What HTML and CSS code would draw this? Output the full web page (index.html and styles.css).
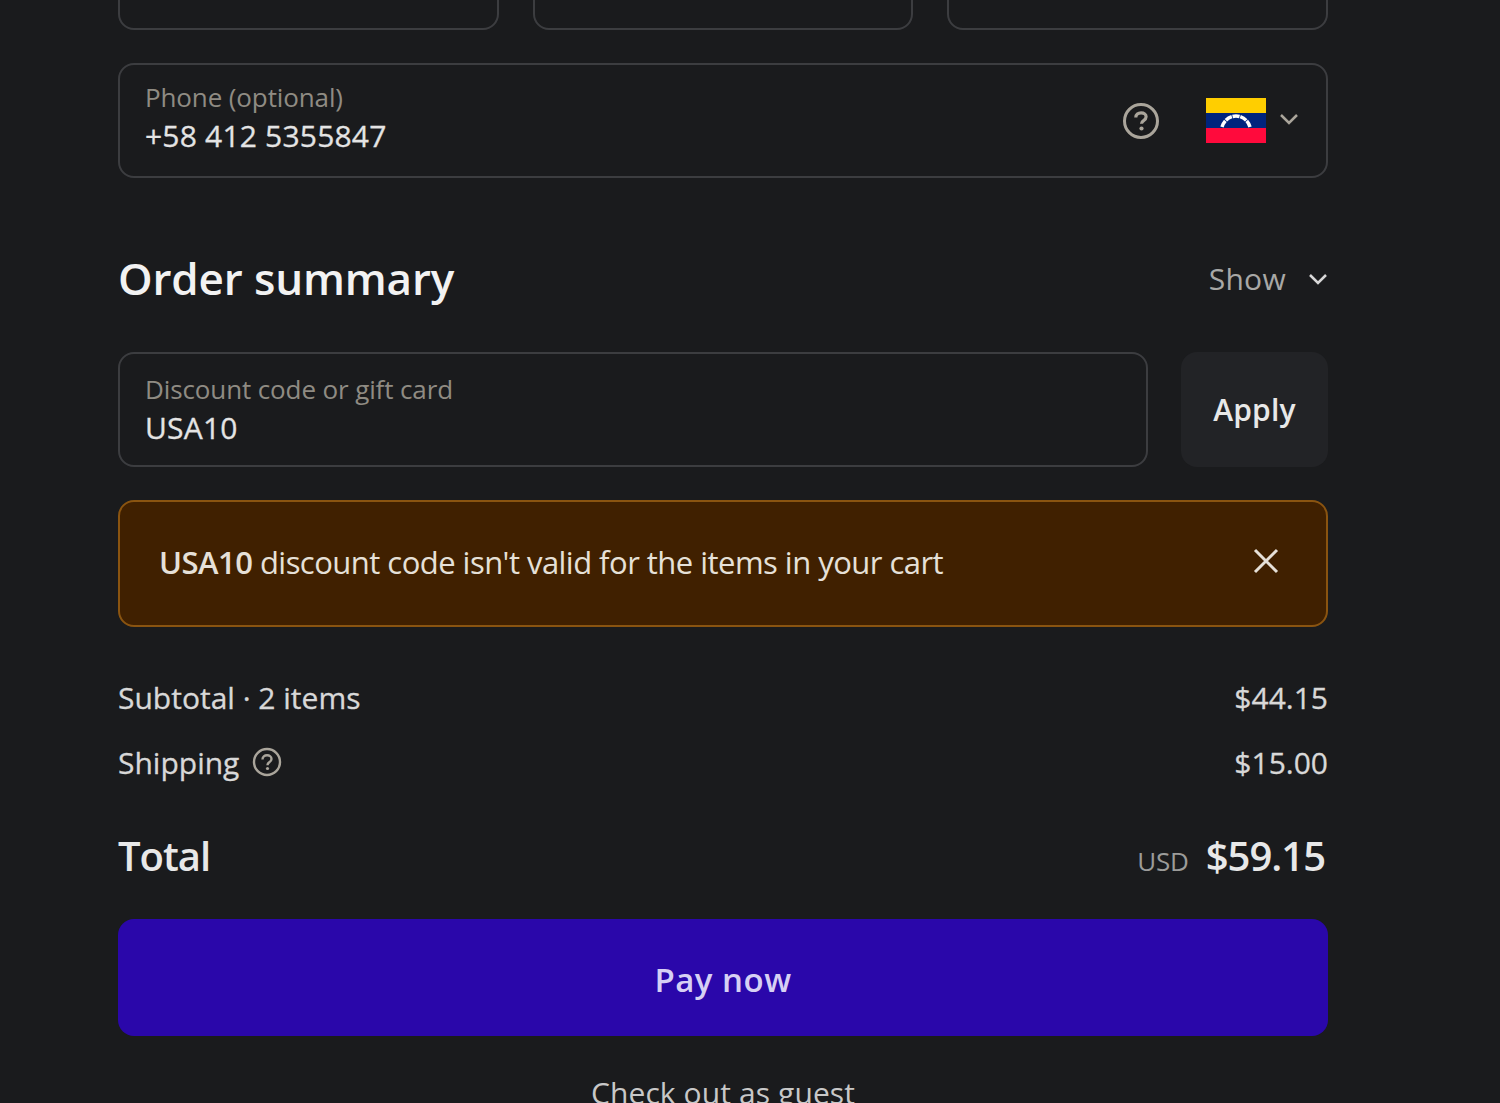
FILE: index.html
```html
<!DOCTYPE html>
<html>
<head>
   <meta charset="UTF-8">
   <meta name="viewport" content="width=device-width, initial-scale=1.0">
   <title>Checkout</title>
   <link rel="stylesheet" href="styles.css">
</head>
<body>
   <div class="checkout">
       <div class="address-row">
           <div class="field"></div>
           <div class="field"></div>
           <div class="field"></div>
       </div>

       <div class="field phone-field">
           <div class="field-text">
               <span class="field-label">Phone (optional)</span>
               <span class="field-value">+58 412 5355847</span>
           </div>
           <svg class="help-icon" viewBox="0 0 38 38" fill="none">
               <circle cx="19" cy="19" r="16.5" stroke="#aaa59b" stroke-width="3"/>
               <path d="M13.8 15.500c0-3 2.300-4.700 5.300-4.700 2.900 0 5 1.600 5 4 0 1.800-1 2.800-2.500 3.800-1.400.9-2.100 1.600-2.100 3.200" stroke="#aaa59b" stroke-width="3.200"/>
               <circle cx="19.500" cy="26.500" r="2.100" fill="#aaa59b"/>
           </svg>
           <svg class="flag" viewBox="0 0 60 45">
               <rect width="60" height="15" fill="#ffce00"/>
               <rect y="15" width="60" height="15" fill="#00247d"/>
               <rect y="30" width="60" height="15" fill="#ff0a3c"/>
               <path d="M16 29c2-7 8-11 14-11s12 4 14 11" fill="none" stroke="#fff" stroke-width="3.500" stroke-dasharray="7 .8"/>
           </svg>
           <svg class="chevron" viewBox="0 0 20 12" fill="none">
               <path d="M2 2l8 8 8-8" stroke="#aaa59b" stroke-width="2.500"/>
           </svg>
       </div>

       <div class="summary-head">
           <h2>Order summary</h2>
           <div class="show-toggle">
               <span>Show</span>
               <svg class="chevron" viewBox="0 0 20 12" fill="none">
                   <path d="M2 2l8 8 8-8" stroke="#d8d8d8" stroke-width="2.500"/>
               </svg>
           </div>
       </div>

       <div class="discount-row">
           <div class="field discount-field">
               <div class="field-text">
                   <span class="field-label">Discount code or gift card</span>
                   <span class="field-value">USA10</span>
               </div>
           </div>
           <button class="apply-button">Apply</button>
       </div>

       <div class="banner">
           <p><strong>USA10</strong> discount code isn't valid for the items in your cart</p>
           <svg class="close-icon" viewBox="0 0 26 26" fill="none">
               <path d="M2 2l22 22M24 2L2 24" stroke="#e6e0d8" stroke-width="3"/>
           </svg>
       </div>

       <div class="line-row subtotal-row">
           <span>Subtotal · 2 items</span>
           <span>$44.15</span>
       </div>
       <div class="line-row shipping-row">
           <span class="shipping-label">Shipping
               <svg class="help-small" viewBox="0 0 30 30" fill="none">
                   <circle cx="15" cy="15" r="13" stroke="#aaa59b" stroke-width="2.400"/>
                   <path d="M10.500 12.500c0-2.600 2-4.200 4.600-4.200 2.500 0 4.400 1.500 4.400 3.600 0 1.600-.9 2.500-2.200 3.400-1.200.8-1.800 1.500-1.800 2.900" stroke="#aaa59b" stroke-width="2.400"/>
                   <circle cx="15.500" cy="21.500" r="1.600" fill="#aaa59b"/>
               </svg>
           </span>
           <span>$15.00</span>
       </div>
       <div class="total-row">
           <span class="total-label">Total</span>
           <span class="total-value"><small>USD</small>$59.15</span>
       </div>

       <button class="pay-button">Pay now</button>
       <div class="guest-link">Check out as guest</div>
   </div>
</body>
</html>
```

FILE: styles.css
```css
* {
    margin: 0;
    padding: 0;
    box-sizing: border-box;
}

html, body {
    height: 1103px;
    overflow: hidden;
}

body {
    font-family: 'Open Sans', 'Noto Sans', sans-serif;
    color: #e4e4e4;
    background-color: #1a1b1d;
}

/* page is scrolled, the first row is cut off by the window */
.checkout {
    width: 1210px;
    margin-left: 118px;
    margin-top: -85px;
}

.address-row {
    display: grid;
    grid-template-columns: repeat(3, 1fr);
    gap: 34px;
    margin-bottom: 33px;
}

.field {
    height: 115px;
    border: 2px solid #3c3d40;
    border-radius: 16px;
    display: flex;
    align-items: center;
    padding: 0 27px 0 25px;
}

.field-text {
    display: flex;
    flex-direction: column;
    flex: 1;
}

.phone-field .field-text {
    margin-top: -6px;
}

.field-label {
    font-size: 26px;
    line-height: 34px;
    letter-spacing: -0.12px;
    color: #8f8b83;
}

.field-value {
    font-size: 30px;
    line-height: 40px;
    letter-spacing: 0.2px;
    margin-top: 2px;
    color: #e4e4e4;
    -webkit-text-stroke: 0.3px #e4e4e4;
}

.help-icon {
    width: 38px;
    height: 38px;
    margin-right: 46px;
}

.flag {
    width: 60px;
    height: 45px;
    margin-right: 13px;
}

.chevron {
    width: 20px;
    height: 12px;
}

.phone-field .chevron {
    margin-top: -4px;
}

.summary-head {
    display: flex;
    justify-content: space-between;
    align-items: center;
    margin-top: 70px;
    margin-bottom: 42px;
    height: 62px;
    padding-bottom: 2px;
}

.summary-head h2 {
    font-size: 44px;
    font-weight: 600;
    letter-spacing: -0.15px;
    color: #f2f2f2;
}

.show-toggle {
    display: flex;
    align-items: center;
    gap: 22px;
    font-size: 30px;
    letter-spacing: 0.3px;
    color: #a8a8a6;
}

.show-toggle .chevron {
    margin-top: 2px;
}

.discount-row {
    display: flex;
    gap: 33px;
    margin-bottom: 33px;
}

.discount-field {
    flex: 1;
}

.apply-button {
    width: 147px;
    height: 115px;
    border: none;
    border-radius: 16px;
    background-color: #222326;
    color: #e8e8e8;
    font-family: inherit;
    font-size: 30px;
    font-weight: 600;
    letter-spacing: 0.2px;
}

.banner {
    height: 127px;
    background-color: #402000;
    border: 2px solid #8a5410;
    border-radius: 16px;
    display: flex;
    align-items: center;
    justify-content: space-between;
    padding: 0 47px 0 39px;
    margin-bottom: 47px;
}

.banner p {
    font-size: 31px;
    letter-spacing: -0.53px;
    margin-top: -4px;
    color: #e6e0d8;
}

.banner strong {
    font-weight: 600;
}

.close-icon {
    width: 26px;
    height: 26px;
    margin-top: -6px;
}

.line-row {
    display: flex;
    justify-content: space-between;
    align-items: center;
    height: 46px;
    font-size: 30px;
    letter-spacing: 0;
    color: #d8d8d8;
    -webkit-text-stroke: 0.3px #d8d8d8;
}

.shipping-row {
    margin-top: 19px;
}

.shipping-label {
    display: flex;
    align-items: center;
    gap: 13px;
}

.help-small {
    width: 30px;
    height: 30px;
}

.total-row {
    display: flex;
    justify-content: space-between;
    align-items: center;
    margin-top: 41px;
    margin-bottom: 35px;
    height: 58px;
}

.total-label,
.total-value {
    font-size: 40px;
    font-weight: 600;
    letter-spacing: -1px;
    color: #e8e8e8;
}

.total-value {
    padding-right: 3px;
}

.total-value small {
    font-size: 26px;
    font-weight: 400;
    letter-spacing: -0.2px;
    color: #9c9c9a;
    margin-right: 17px;
}

.pay-button {
    display: block;
    width: 100%;
    height: 117px;
    padding-top: 3px;
    border: none;
    border-radius: 16px;
    background-color: #2a07aa;
    color: #d6d0f4;
    font-family: inherit;
    font-size: 33px;
    font-weight: 600;
    letter-spacing: 0.5px;
}

.guest-link {
    margin-top: 36px;
    text-align: center;
    font-size: 30px;
    letter-spacing: 0.1px;
    color: #c8c8c8;
}
```
